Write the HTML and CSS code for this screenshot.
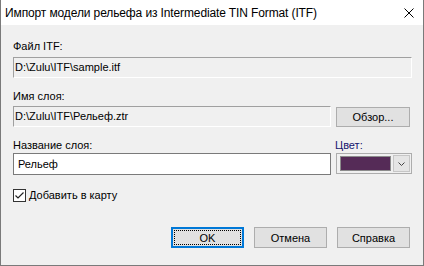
FILE: index.html
```html
<!DOCTYPE html>
<html lang="ru">
<head>
    <meta charset="UTF-8">
    <title>Импорт модели рельефа</title>
    <link rel="stylesheet" href="styles.css">
</head>
<body>

<div class="window">
    <div class="titlebar">
        <span class="title">Импорт модели рельефа из Intermediate TIN Format (ITF)</span>
        <svg class="close" width="10" height="10" viewBox="0 0 10 10">
            <path d="M0.5 0.5 L9.5 9.5 M9.5 0.5 L0.5 9.5" stroke="#000" stroke-width="1" fill="none"/>
        </svg>
    </div>

    <div class="dialog">
        <div class="label">Файл ITF:</div>
        <div class="static-field">D:\Zulu\ITF\sample.itf</div>

        <div class="label label-gap">Имя слоя:</div>
        <div class="row">
            <div class="static-field">D:\Zulu\ITF\Рельеф.ztr</div>
            <button class="btn btn-browse">Обзор...</button>
        </div>

        <div class="row row-name">
            <div class="col">
                <div class="label">Название слоя:</div>
                <div class="edit-field">Рельеф</div>
            </div>
            <div class="col">
                <div class="label label-color">Цвет:</div>
                <div class="color-combo">
                    <div class="swatch"></div>
                    <div class="drop-btn">
                        <svg width="7" height="4" viewBox="0 0 7 4">
                            <path d="M0.5 0.5 L3.5 3.5 L6.5 0.5" stroke="#444" stroke-width="1" fill="none"/>
                        </svg>
                    </div>
                </div>
            </div>
        </div>

        <label class="check-row">
            <span class="checkbox">
                <svg width="11" height="11" viewBox="0 0 11 11">
                    <path d="M1.5 5.5 L4 8 L9.5 2.5" stroke="#222" stroke-width="1.2" fill="none"/>
                </svg>
            </span>
            Добавить в карту
        </label>

        <div class="buttons">
            <button class="btn btn-default"><span class="focus">OK</span></button>
            <button class="btn">Отмена</button>
            <button class="btn">Справка</button>
        </div>
    </div>
</div>

</body>
</html>
```

FILE: styles.css
```css
html, body {
    margin: 0;
    padding: 0;
}
body {
    font-family: "Liberation Sans", Arial, sans-serif;
    color: #000;
    background: #f0f0f0;
}
.window {
    width: 424px;
    height: 266px;
    box-sizing: border-box;
    border: 1px solid #7a7a7a;
    border-top: none;
    background: #f0f0f0;
}
.titlebar {
    height: 25px;
    background: #fff;
    display: flex;
    align-items: center;
    justify-content: space-between;
    padding: 0 9px 0 4px;
}
.title {
    font-size: 12px;
    line-height: 16px;
    letter-spacing: -0.12px;
    margin-top: 1px;
}
.close {
    display: block;
    margin-top: 1px;
}
.dialog {
    padding: 15px 11px 0 12px;
    font-size: 11px;
}
.label {
    height: 13px;
    line-height: 13px;
    margin-bottom: 4px;
}
.label-gap {
    margin-top: 12px;
    margin-bottom: 3px;
}
.static-field {
    height: 21px;
    box-sizing: border-box;
    border: 1px solid #a0a0a0;
    border-right-color: #fff;
    border-bottom-color: #fff;
    padding: 0 1px;
    line-height: 18px;
    white-space: nowrap;
}
.row {
    display: grid;
    grid-template-columns: 1fr 76px;
    column-gap: 5px;
}
.row-name {
    margin-top: 12px;
}
.row-name .label {
    margin-bottom: 1px;
}
.edit-field {
    height: 22px;
    box-sizing: border-box;
    border: 1px solid #7a7a7a;
    background: #fff;
    padding: 0 4px;
    line-height: 20px;
}
.label-color {
    color: #14146e;
    margin-left: -1px;
}
.color-combo {
    height: 21px;
    margin-top: 1px;
    box-sizing: border-box;
    border: 1px solid #adadad;
    display: flex;
    align-items: center;
    padding: 0 1px 0 3px;
    gap: 2px;
}
.swatch {
    flex: 1;
    height: 13px;
    border: 1px solid #8c8c8c;
    background: #552b57;
}
.drop-btn {
    width: 17px;
    height: 17px;
    box-sizing: border-box;
    border: 1px solid #c6c6c6;
    background: #e5e5e5;
    display: flex;
    align-items: center;
    justify-content: center;
}
.drop-btn svg {
    display: block;
}
.btn {
    font-family: "Liberation Sans", Arial, sans-serif;
    font-size: 11px;
    color: #000;
    background: #e1e1e1;
    border: 1px solid #adadad;
    height: 21px;
    width: 73px;
    padding: 0;
    margin: 0;
    box-sizing: border-box;
}
.btn-browse {
    width: 74px;
    height: 20px;
    margin-top: 1px;
}
.check-row {
    display: flex;
    align-items: center;
    gap: 3px;
    margin-top: 14px;
    height: 13px;
    line-height: 13px;
}
.checkbox {
    width: 13px;
    height: 13px;
    box-sizing: border-box;
    border: 1px solid #333;
    background: #fff;
    display: flex;
    align-items: center;
    justify-content: center;
}
.checkbox svg {
    display: block;
}
.buttons {
    display: flex;
    justify-content: flex-end;
    gap: 10px;
    margin-top: 25px;
    padding-right: 2px;
}
.btn-default {
    border: 2px solid #0078d7;
    padding: 1px;
}
.focus {
    display: flex;
    align-items: center;
    justify-content: center;
    height: 100%;
    border: 1px dotted #000;
    box-sizing: border-box;
}
```
